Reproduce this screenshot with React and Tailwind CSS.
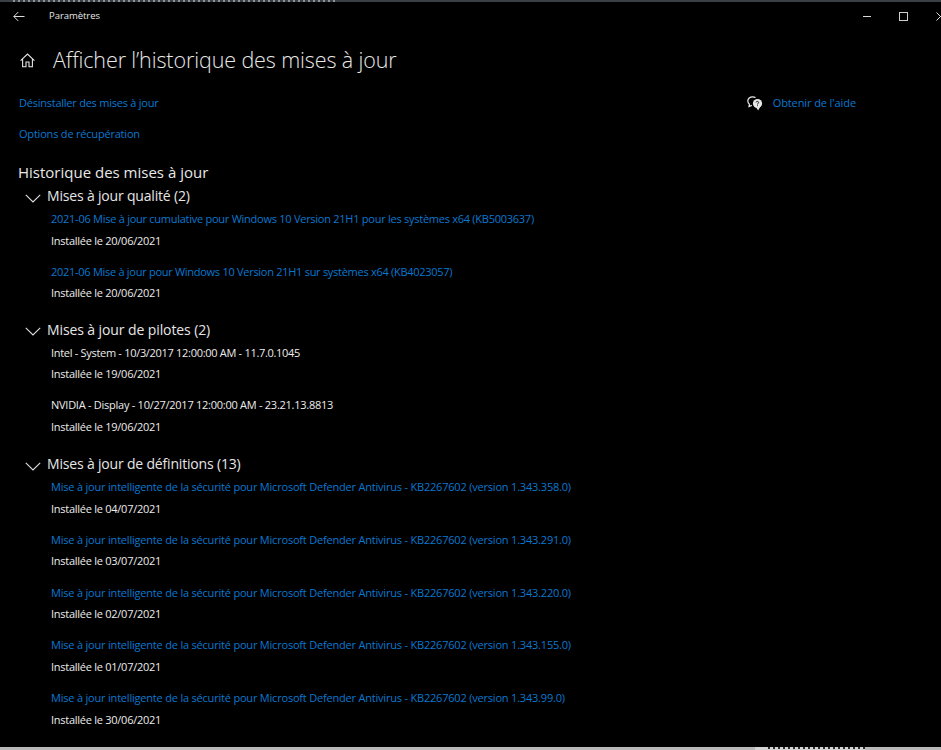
import React from "react";

function Item({ title, date, link = true, tr = "tracking-[-0.2px]" }) {
  return (
    <div className="mb-[12.25px]">
      <div className={`h-[19px] leading-[19px] text-[11px] whitespace-nowrap ${tr} ${link ? "text-[#0b78d0]" : "text-[#ececec]"}`}>{title}</div>
      <div className="mt-[2.5px] h-[19px] leading-[19px] text-[11px] tracking-[-0.26px] text-[#ececec] whitespace-nowrap">{date}</div>
    </div>
  );
}

function Group({ title, children, pb, tr = "tracking-[-0.18px]" }) {
  return (
    <section className={pb}>
      <div className="flex items-center h-[22px]">
        <svg width="16" height="9" viewBox="0 0 16 9" className="ml-[25px] mt-[4px] shrink-0" fill="none" stroke="#e0e0e0" strokeWidth="1.1">
          <path d="M0.8 0.8 L8 8 L15.2 0.8" />
        </svg>
        <span className={`ml-[6px] text-[14px] leading-[22px] text-[#e6e6e6] whitespace-nowrap ${tr}`}>{title}</span>
      </div>
      <div className="pl-[51px] mt-[2px]">{children}</div>
    </section>
  );
}

export default function App() {
  const def = (v) => `Mise à jour intelligente de la sécurité pour Microsoft Defender Antivirus - KB2267602 (version ${v})`;
  return (
    <div className="w-[941px] h-[750px] bg-black overflow-hidden flex flex-col font-['Open_Sans','Noto_Sans',sans-serif]">
      <div className="h-[2px] bg-[#3a4046] shrink-0 flex">
        <div className="ml-[13px] w-[322px] h-[2px] bg-[repeating-linear-gradient(90deg,#8d9298_0_2px,#3a4046_2px_5px)]" />
      </div>
      <header className="h-[28px] flex items-center shrink-0 text-[#e6e6e6]">
        <svg width="12" height="11" viewBox="0 0 12 11" className="ml-[13px]" fill="none" stroke="#dcdcdc" strokeWidth="1">
          <path d="M0.8 5.5 H11.5 M5.3 1 L0.8 5.5 L5.3 10" />
        </svg>
        <span className="ml-[24px] text-[9.5px] tracking-[-0.05px] leading-none">Paramètres</span>
        <div className="ml-auto flex items-center">
          <div className="w-[8px] h-px bg-[#d8d8d8] mr-[28px] shrink-0" />
          <div className="w-[9px] h-[9px] border border-[#d0d0d0] mr-[28px] shrink-0" />
          <svg width="9" height="9" viewBox="0 0 9 9" className="mr-[-4px] shrink-0" stroke="#d8d8d8" strokeWidth="1"><path d="M0.5 0.5 L8.5 8.5 M8.5 0.5 L0.5 8.5" /></svg>
        </div>
      </header>
      <main className="flex-1 min-h-0 overflow-hidden">
        <div className="flex items-center h-[32px] mt-[14px] pl-[20px]">
          <svg width="15" height="15" viewBox="0 0 15 15" fill="none" stroke="#e6e6e6" strokeWidth="1.1">
            <path d="M0.6 7.6 L7.5 1 L14.4 7.6 M2.6 6.2 V13.8 H6 V9 H9 V13.8 H12.4 V6.2" />
          </svg>
          <h1 className="ml-[18px] text-[21.5px] leading-[32px] tracking-[-0.11px] font-light text-[#e8e8e8] whitespace-nowrap">Afficher l’historique des mises à jour</h1>
        </div>
        <div className="flex justify-between mt-[19px] pl-[19px] pr-[85px]">
          <div className="text-[11px] leading-[16px] tracking-[-0.24px] text-[#0b78d0]">Désinstaller des mises à jour</div>
          <div className="flex items-center text-[11px] leading-[16px] tracking-[-0.1px] text-[#0b78d0]">
            <svg width="16" height="15" viewBox="0 0 16 15" className="mr-[10px]" fill="none" stroke="#e8e8e8" strokeWidth="1.2">
              <path d="M8.5 1.6 C7.6 1 6.6 0.8 5.6 0.8 C2.9 0.8 0.8 2.7 0.8 5.1 C0.8 6.4 1.4 7.5 2.4 8.3 L2 10.6 L4.8 9.4" />
              <circle cx="10.5" cy="7.6" r="4.6" fill="#e8e8e8" stroke="none" />
              <path d="M9.2 11.4 L11.2 14.4 L13 11" fill="#e8e8e8" stroke="none" />
              <path d="M9 6.3 C9.2 5 11.8 5.1 11.6 6.6 C11.5 7.4 10.5 7.4 10.5 8.5 M10.5 9.4 V10.2" stroke="#000" strokeWidth="0.9" />
            </svg>
            Obtenir de l'aide
          </div>
        </div>
        <div className="mt-[15px] pl-[19px] text-[11px] leading-[16px] tracking-[-0.2px] text-[#0b78d0]">Options de récupération</div>
        <h2 className="mt-[19px] pl-[18px] text-[15px] leading-[22px] text-[#e8e8e8]">Historique des mises à jour</h2>
        <div className="mt-[2px]">
          <Group title="Mises à jour qualité (2)" pb="pb-[4px]">
            <Item tr="tracking-[-0.26px]" title="2021-06 Mise à jour cumulative pour Windows 10 Version 21H1 pour les systèmes x64 (KB5003637)" date="Installée le 20/06/2021" />
            <Item tr="tracking-[-0.28px]" title="2021-06 Mise à jour pour Windows 10 Version 21H1 sur systèmes x64 (KB4023057)" date="Installée le 20/06/2021" />
          </Group>
          <Group title="Mises à jour de pilotes (2)" pb="pb-[5px]" tr="tracking-[-0.1px]">
            <Item link={false} tr="tracking-[-0.3px]" title="Intel - System - 10/3/2017 12:00:00 AM - 11.7.0.1045" date="Installée le 19/06/2021" />
            <Item link={false} tr="tracking-[-0.26px]" title="NVIDIA - Display - 10/27/2017 12:00:00 AM - 23.21.13.8813" date="Installée le 19/06/2021" />
          </Group>
          <Group title="Mises à jour de définitions (13)">
            <Item title={def("1.343.358.0")} date="Installée le 04/07/2021" />
            <Item title={def("1.343.291.0")} date="Installée le 03/07/2021" />
            <Item title={def("1.343.220.0")} date="Installée le 02/07/2021" />
            <Item title={def("1.343.155.0")} date="Installée le 01/07/2021" />
            <Item title={def("1.343.99.0")} date="Installée le 30/06/2021" />
          </Group>
        </div>
      </main>
      <div className="h-[3px] bg-[#b9b9b9] shrink-0 flex">
        <div className="ml-[755px] w-[110px] h-[3px] bg-[#d4d4d4] pl-[13px]">
          <div className="w-[97px] h-[2px] bg-[repeating-linear-gradient(90deg,#2b2b2b_0_2px,#d4d4d4_2px_5px)]" />
        </div>
      </div>
    </div>
  );
}
